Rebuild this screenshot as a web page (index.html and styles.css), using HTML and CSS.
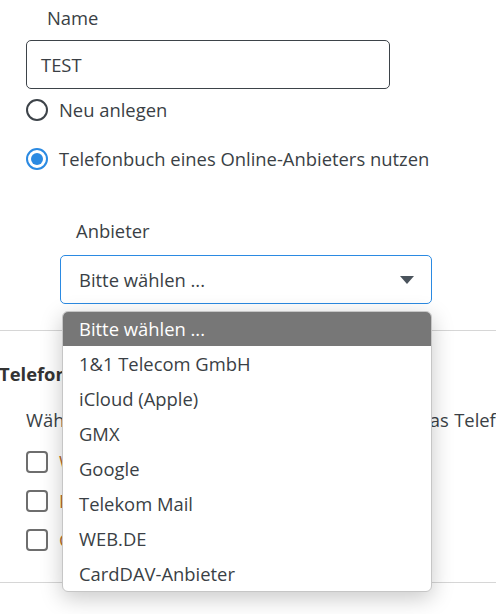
FILE: index.html
```html
<!DOCTYPE html>
<html lang="de">
<head>
<meta charset="utf-8">
<title>Telefonbuch</title>
<link rel="stylesheet" href="styles.css">
</head>
<body>
<div class="form">
  <div class="label name-label">Name</div>
  <div class="input">TEST</div>
  <div class="radio-row first"><span class="radio"></span><span>Neu anlegen</span></div>
  <div class="radio-row second"><span class="radio checked"></span><span>Telefonbuch eines Online-Anbieters nutzen</span></div>
  <div class="provider">
    <div class="label">Anbieter</div>
    <div class="select-wrap">
      <div class="select"><span>Bitte wählen ...</span><span class="caret"></span></div>
      <ul class="dropdown">
        <li class="active">Bitte wählen ...</li>
        <li>1&amp;1 Telecom GmbH</li>
        <li>iCloud (Apple)</li>
        <li>GMX</li>
        <li>Google</li>
        <li>Telekom Mail</li>
        <li>WEB.DE</li>
        <li>CardDAV-Anbieter</li>
      </ul>
    </div>
  </div>
</div>
<div class="sep first-sep"></div>
<section class="books">
  <h3 class="heading">Telefonbücher</h3>
  <p class="intro">Wählen Sie hier bitte die Kontakte aus, die in das Telefonbuch übernommen werden sollen.</p>
  <ul class="checks">
    <li><span class="box"></span><span class="check-label">Weitere Kontakte</span></li>
    <li><span class="box"></span><span class="check-label">Privat</span></li>
    <li><span class="box"></span><span class="check-label">Geschäftlich</span></li>
  </ul>
</section>
<div class="sep last-sep"></div>
</body>
</html>
```
FILE: styles.css
```css
html, body {
  margin: 0;
  padding: 0;
  background: #ffffff;
}
body {
  font-family: "Open Sans", "Noto Sans", sans-serif;
  font-size: 18.4px;
  line-height: 24px;
  color: #3a3f45;
  overflow: hidden;
  width: 496px;
  height: 614px;
}
.form {
  padding: 6px 0 0 26px;
}
.label {
  height: 24px;
}
.name-label {
  margin-left: 21px;
  margin-bottom: 10px;
}
.input {
  box-sizing: border-box;
  width: 364px;
  height: 49px;
  border: 1px solid #3d4349;
  border-radius: 5px;
  padding-left: 14px;
  display: flex;
  align-items: center;
}
.radio-row {
  display: flex;
  align-items: center;
  gap: 11px;
  height: 24px;
}
.radio-row.first { margin-top: 9px; }
.radio-row.second { margin-top: 25px; }
.radio {
  box-sizing: border-box;
  width: 22px;
  height: 22px;
  border: 2px solid #3d4349;
  border-radius: 50%;
  flex: none;
  display: flex;
  align-items: center;
  justify-content: center;
}
.radio.checked {
  border-color: #2b8ae2;
}
.radio.checked::after {
  content: "";
  width: 12px;
  height: 12px;
  border-radius: 50%;
  background: #2b8ae2;
}
.provider {
  margin-left: 34px;
  margin-top: 48px;
}
.provider .label {
  margin-left: 16px;
  margin-bottom: 12px;
}
.select-wrap {
  position: relative;
  width: 372px;
}
.select {
  box-sizing: border-box;
  height: 49px;
  border: 1px solid #2b8ae2;
  border-radius: 5px;
  padding: 0 17px 0 18px;
  display: flex;
  align-items: center;
  justify-content: space-between;
}
.caret {
  width: 0;
  height: 0;
  border-left: 7px solid transparent;
  border-right: 7px solid transparent;
  border-top: 8px solid #4a535c;
}
.dropdown {
  position: absolute;
  left: 2px;
  top: 56px;
  width: 370px;
  box-sizing: border-box;
  margin: 0;
  padding: 0;
  list-style: none;
  background: #ffffff;
  border: 1px solid #c6c6c6;
  border-radius: 6px;
  box-shadow: 0 6px 22px rgba(0, 0, 0, 0.22);
  overflow: hidden;
  z-index: 5;
}
.dropdown li {
  height: 35px;
  padding-left: 16px;
  display: flex;
  align-items: center;
  color: #3a3f45;
}
.dropdown li.active {
  background: #777777;
  color: #ffffff;
  height: 34px;
}
.sep {
  height: 1px;
  background: #d6d6d6;
}
.first-sep { margin-top: 26px; }
.books {
  padding-left: 26px;
}
.heading {
  margin: 31px 0 0 -27px;
  font-size: 18.4px;
  line-height: 24px;
  font-weight: 700;
  color: #333333;
}
.intro {
  margin: 22px 0 0 0;
  white-space: nowrap;
  word-spacing: 0.7px;
}
.checks {
  list-style: none;
  margin: 10px 0 0 0;
  padding: 0;
}
.checks li {
  height: 39px;
  display: flex;
  align-items: center;
  gap: 11px;
}
.box {
  box-sizing: border-box;
  width: 22px;
  height: 22px;
  border: 2px solid #6e6e6e;
  border-radius: 4px;
  flex: none;
}
.check-label {
  color: #b8702a;
}
.last-sep { margin-top: 23px; }
```
